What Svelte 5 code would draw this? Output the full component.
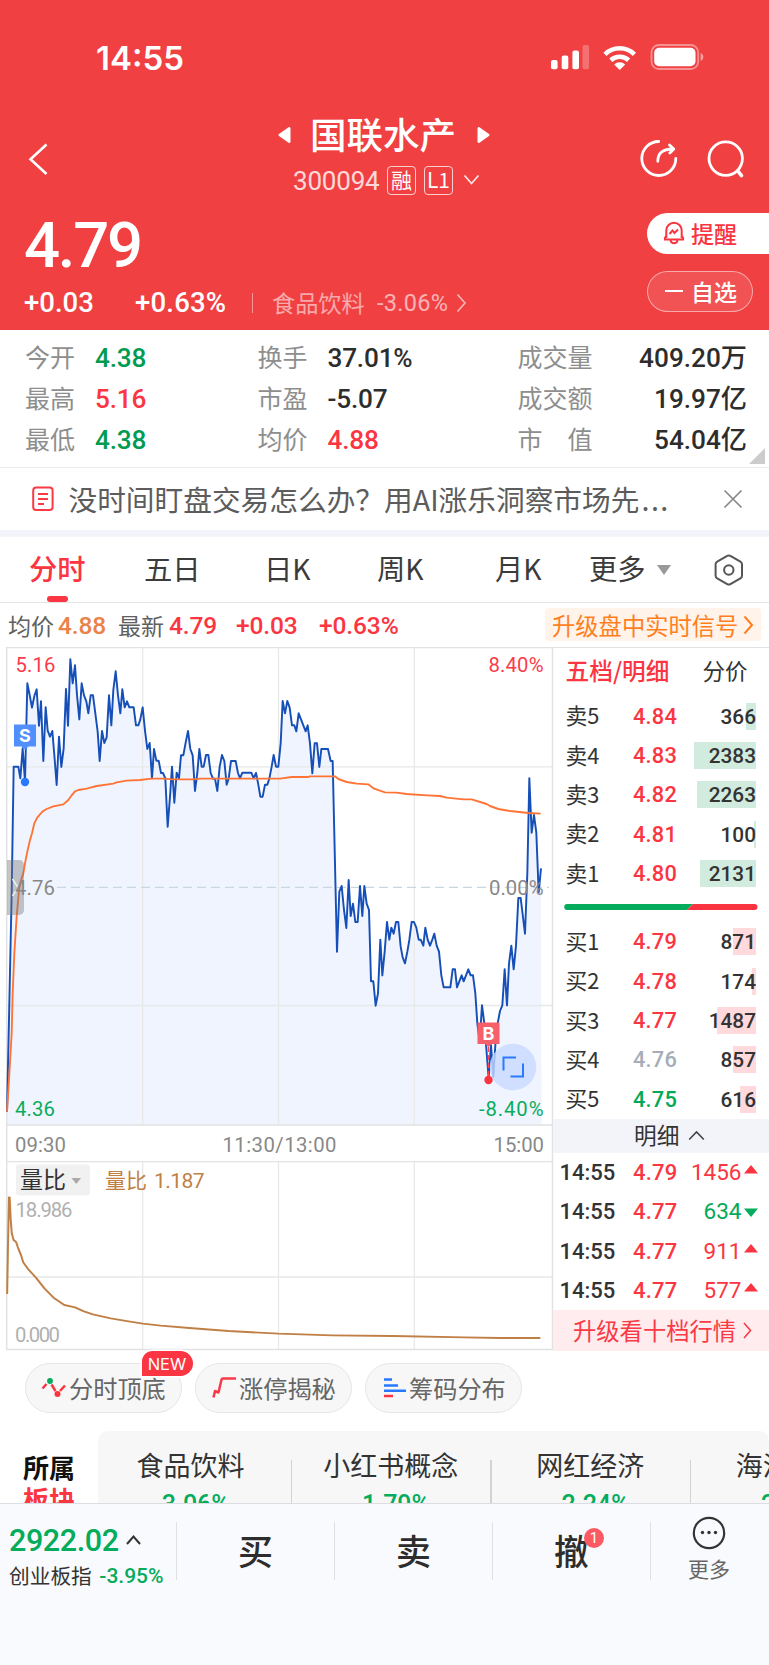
<script>
  const stats = [
    ['今开', '4.38', 'green', '换手', '37.01%', '', '成交量', '409.20万'],
    ['最高', '5.16', 'red', '市盈', '-5.07', '', '成交额', '19.97亿'],
    ['最低', '4.38', 'green', '均价', '4.88', 'red', '市　值', '54.04亿']
  ];
  const asks = [
    ['卖5', '4.84', 366, 10],
    ['卖4', '4.83', 2383, 62],
    ['卖3', '4.82', 2263, 59],
    ['卖2', '4.81', 100, 2],
    ['卖1', '4.80', 2131, 56]
  ];
  const bids = [
    ['买1', '4.79', 871, 23, 'red'],
    ['买2', '4.78', 174, 4.5, 'red'],
    ['买3', '4.77', 1487, 39, 'red'],
    ['买4', '4.76', 857, 23, 'flat'],
    ['买5', '4.75', 616, 16, 'green']
  ];
  const ticks = [
    ['14:55', '4.79', 1456, true],
    ['14:55', '4.77', 634, false],
    ['14:55', '4.77', 911, true],
    ['14:55', '4.77', 577, true]
  ];
  const sectors = [
    ['食品饮料', '-3.06%'],
    ['小红书概念', '-1.79%'],
    ['网红经济', '-2.24%'],
    ['海洋经济', '-2.35%']
  ];

  const morning =
    '21,1415 28,1090 35,760 41,380 55,380 61,415 68,325 75,425 82,130 89,165 96,203 103,168 110,148 117,257 123,184 130,363 137,202 143,272 150,290 157,273 163,345 170,435 177,290 184,381 191,325 198,147 204,257 211,58 218,130 225,76 231,165 238,238 245,130 252,166 259,184 265,220 272,166 279,166 286,220 293,275 299,363 306,273 313,309 320,292 327,166 334,256 340,150 347,94 354,166 361,220 367,148 374,202 381,184 388,202 401,202 408,256 415,256 421,238 428,202 435,272 442,327 449,309 456,415 462,327 469,362 476,362 483,399 489,399 496,415 503,560 510,470 516,380 523,488 530,398 537,415 543,346 550,346 557,308 564,273 571,327 578,346 585,453 592,399 598,327 605,380 611,380 618,345 625,345 632,399 639,416 645,416 652,453 659,380 666,345 673,363 680,434 686,416 693,363 707,363 714,399 720,415 727,398 754,398 761,415 768,399 775,434 781,470 788,470 795,434 802,434 808,416 815,380 821,345 828,380 835,380';
  const afternoon =
    '842,310 848,183 855,220 862,183 869,203 876,256 883,256 889,274 896,220 917,274 923,256 930,310 937,400 944,310 951,310 958,381 964,327 984,327 992,363 998,363 1011,935 1018,755 1025,738 1032,810 1039,864 1046,720 1052,828 1059,791 1066,846 1073,846 1080,738 1087,828 1093,738 1100,791 1107,810 1113,1024 1120,1024 1127,1097 1134,1060 1141,899 1147,1006 1154,935 1161,846 1168,899 1174,863 1181,881 1188,846 1195,846 1202,920 1208,952 1215,970 1222,935 1228,900 1235,846 1242,846 1249,863 1256,899 1262,899 1270,917 1276,863 1283,899 1290,917 1297,899 1303,881 1310,917 1317,935 1324,1006 1331,1042 1351,1042 1358,988 1365,988 1371,1042 1378,1024 1385,1006 1391,1024 1398,1006 1405,988 1412,1006 1419,1006 1426,1060 1432,1150 1439,1205 1446,1096 1453,1150 1459,1225 1466,1315 1473,1215 1480,1310 1487,1200 1493,1150 1500,1113 1507,1096 1514,988 1521,1096 1527,971 1534,917 1541,988 1548,917 1555,774 1562,774 1575,881 1582,700 1588,415 1595,578 1602,525 1609,578 1616,757 1623,685';
  const price = morning + ' ' + afternoon;
  const average =
    '21,1415 28,1300 35,1180 38,1060 43,940 50,830 56,760 60,730 70,700 76,665 82,635 90,600 96,580 103,550 112,532 128,514 140,507 160,499 190,493 205,480 215,466 225,454 235,450 260,446 290,438 340,431 350,427 380,422 420,420 455,416 495,416 515,418 580,418 600,416 840,416 875,411 925,411 930,409 1005,409 1015,417 1040,426 1070,431 1105,433 1122,446 1155,457 1190,458 1220,462 1280,466 1320,468 1340,473 1390,478 1415,478 1460,492 1470,498 1495,507 1530,513 1585,519 1622,521';
  const ratio =
    '20,522 22,400 25,232 27,232 30,300 33,340 38,360 45,366 50,382 58,403 65,427 80,449 100,472 125,506 150,533 180,555 210,562 235,574 260,583 310,595 360,604 400,611 450,617 530,624 640,633 780,641 930,646 1100,648 1300,652 1400,654 1513,654';
</script>

<div class="page">
  <header>
    <div class="status">
      <span class="clock">14:55</span>
      <svg width="154" height="26" viewBox="551 44 154 26" fill="#fff">
        <rect x="551" y="60" width="6.6" height="9.2" rx="2" />
        <rect x="561.7" y="55.5" width="6.6" height="13.7" rx="2" />
        <rect x="572.4" y="50.5" width="6.6" height="18.7" rx="2" />
        <rect x="582.5" y="45" width="6.6" height="24.2" rx="2" opacity=".25" />
        <g fill="none" stroke="#fff" stroke-width="4.6">
          <path d="M605 54.300a21 21 0 0 1 29.400 0" />
          <path d="M610.800 60.200a13 13 0 0 1 17.800 0" />
        </g>
        <path d="M614.200 64.400a8 8 0 0 1 11 0l-5.500 5.600z" />
        <rect x="651.500" y="45" width="46.700" height="24" rx="7.500" fill="none" stroke="#fff" stroke-opacity=".42" stroke-width="1.800" />
        <rect x="654.200" y="47.800" width="41.300" height="18.400" rx="5" />
        <path d="M700.600 53v8c3.600-1.300 3.600-6.700 0-8z" opacity=".5" />
      </svg>
    </div>
    <div class="nav">
      <svg class="back" width="22" height="34" viewBox="27 142 22 34" fill="none" stroke="#fff" stroke-width="2.6"><path d="M46.500 144.500L30.500 159.300L46.500 174" /></svg>
      <div class="name">
        <div class="title">
          <svg width="13" height="18" viewBox="0 0 13 18" fill="#fff"><path d="M10.500 1.200L1 8a1.300 1.300 0 0 0 0 2l9.500 6.800a1.300 1.300 0 0 0 2-1V2.200a1.300 1.300 0 0 0-2-1z" /></svg>
          <span>国联水产</span>
          <svg width="13" height="18" viewBox="0 0 13 18" fill="#fff"><path d="M2.500 1.200L12 8a1.300 1.300 0 0 1 0 2l-9.500 6.800a1.300 1.300 0 0 1-2-1V2.200a1.300 1.300 0 0 1 2-1z" /></svg>
        </div>
        <div class="code">
          <span class="num">300094</span>
          <b>融</b><b class="lv">L1</b>
          <svg width="17" height="12" viewBox="0 0 17 12" fill="none" stroke="#fff" stroke-opacity=".85" stroke-width="1.800"><path d="M1.500 1.500l7 8l7-8" /></svg>
        </div>
      </div>
      <svg class="actions" width="106" height="40" viewBox="640 139 106 40" fill="none" stroke="#fff" stroke-width="2.800" stroke-linecap="round">
        <path d="M658.700 141.500A17 17 0 1 0 675.800 158.500" />
        <path d="M657.800 161.300c0-7.500 3.500-12.300 15.500-12.300M669.500 145l4.300 4l-4 4" stroke-linejoin="round" />
        <circle cx="725.700" cy="158.600" r="16.700" /><path d="M737.800 171l3.700 4.700" stroke-width="3.600" />
      </svg>
    </div>
    <div class="quote">
      <div class="left">
        <div class="big">4.79</div>
        <div class="change">
          <span class="d1">+0.03</span><span class="d2">+0.63%</span><i></i>
          <span class="ind">食品饮料</span><span class="indp">-3.06%</span>
          <svg width="11" height="20" viewBox="0 0 11 20" fill="none" stroke="#fff" stroke-opacity=".6" stroke-width="1.700"><path d="M1.500 1.500L9 10L1.500 18.500" /></svg>
        </div>
      </div>
      <div class="right">
        <div class="pill alert">
          <svg width="22" height="24" viewBox="0 0 22 24" fill="none" stroke="#f9353f" stroke-width="2"><path d="M3.300 17V9.500a7.700 7.700 0 0 1 15.400 0V17M1 18.500h20M3.300 14.500L1.500 18M18.700 14.500L20.500 18M7.500 19.500c.8 3.500 6.200 3.500 7 0M6.500 13l3-3.500l2 2.500l3.500-3.500" /></svg>
          提醒
        </div>
        <div class="pill own"><i></i>自选</div>
      </div>
    </div>
  </header>

  <section class="stats">
    {#each stats as s}
      <div class="row">
        <span class="lb">{s[0]}</span><span class="vl {s[2]}">{s[1]}</span>
        <span class="lb">{s[3]}</span><span class="vl {s[5]}">{s[4]}</span>
        <span class="lb">{s[6]}</span><span class="vl end">{s[7]}</span>
      </div>
    {/each}
    <span class="corner"></span>
  </section>

  <section class="notice">
    <svg width="22" height="26" viewBox="0 0 22 26" fill="none" stroke="#fa3a45" stroke-width="2"><rect x="1.200" y="1.500" width="19.400" height="22.500" rx="3" /><path d="M6 8h10M6 13h10M6 18h6" stroke-width="1.800" /></svg>
    <p>没时间盯盘交易怎么办？用AI涨乐洞察市场先<span>...</span></p>
    <svg width="20" height="20" viewBox="0 0 20 20" stroke="#888" stroke-width="1.700"><path d="M1.500 1.500l17 17M18.500 1.500l-17 17" /></svg>
  </section>

  <nav class="tabs">
    <span class="on">分时</span><span>五日</span><span>日K</span><span>周K</span><span>月K</span>
    <span>更多</span>
    <svg class="tri" width="14" height="10" viewBox="0 0 14 10" fill="#999"><path d="M0 0h14L7 10z" /></svg>
    <svg width="30" height="32" viewBox="0 0 30 32" fill="none" stroke="#555" stroke-width="2"><path d="M13.200 1.900a3 3 0 0 1 3.200 0l10 5.800a3 3 0 0 1 1.600 2.700v11.200a3 3 0 0 1-1.600 2.700l-10 5.800a3 3 0 0 1-3.200 0l-10-5.800a3 3 0 0 1-1.600-2.700V10.400a3 3 0 0 1 1.600-2.700z" /><circle cx="14.800" cy="16" r="4.700" /></svg>
  </nav>

  <section class="info">
    <span class="t">均价</span><span class="n a">4.88</span>
    <span class="t">最新</span><span class="n">4.79</span><span class="n p">+0.03</span><span class="n q">+0.63%</span>
    <div class="promo">升级盘中实时信号<svg width="11" height="20" viewBox="0 0 11 20" fill="none" stroke="#ff7f1f" stroke-width="2"><path d="M1.500 1.500L9 10L1.500 18.500" /></svg></div>
  </section>

  <section class="market">
    <div class="charts">
      <svg width="554" height="514" viewBox="0 647 554 514">
        <g transform="translate(0 640) scale(.33333)">
          <polygon points="21,1455 {price} 1625,1455" fill="#eff4ff" />
        </g>
        <g fill="none" stroke="#e8e8e8" stroke-width="1.300">
          <path d="M142.700 647v478M278.500 647v478M414.300 647v478M6 766.800h547M6 1005.500h547" />
          <path d="M6.700 1161V647.500H552.500V1161M6 1125h547" stroke="#e0e2e4" stroke-width="1.500" />
        </g>
        <path d="M57 887.300h492" stroke="#c9d7e0" stroke-width="1.300" stroke-dasharray="9 5" />
        <g transform="translate(0 640) scale(.33333)" fill="none">
          <polyline points={price} stroke="#164fb7" stroke-width="5.800" stroke-linejoin="round" />
          <polyline points={average} stroke="#ff7435" stroke-width="5.600" stroke-linejoin="round" />
        </g>
        <path d="M7 860h12a5 5 0 0 1 5 5v45a5 5 0 0 1-5 5H7z" fill="#777" fill-opacity=".42" />
        <path d="M12.500 879l5.500 8.500l-5.500 8.500" fill="none" stroke="#eee" stroke-width="1.500" />
        <g class="axis">
          <text x="15.500" y="672.400" fill="#fb3b49" textLength="40">5.16</text>
          <text x="543.500" y="672.400" text-anchor="end" fill="#fb3b49" textLength="55">8.40%</text>
          <text x="15" y="894.700" textLength="40">4.76</text>
          <text x="543.500" y="894.700" text-anchor="end" textLength="54.500">0.00%</text>
          <text x="15" y="1116.200" fill="#08ac5b" textLength="40">4.36</text>
          <text x="543.500" y="1116.200" text-anchor="end" fill="#08ac5b" textLength="64.500">-8.40%</text>
          <text x="15" y="1151.500" textLength="51">09:30</text>
          <text x="222.500" y="1151.500" textLength="114">11:30/13:00</text>
          <text x="493.500" y="1151.500" textLength="50.500">15:00</text>
        </g>
        <path d="M14 724.500h22v22h-7.500l-3.500 3l-3.500-3H14z" fill="#508ffc" />
        <circle cx="25" cy="782" r="4.200" fill="#2878ff" />
        <text class="tag" x="25" y="742">S</text>
        <path d="M488.500 1047v30" stroke="#ff4450" stroke-width="1.500" stroke-dasharray="5 3" />
        <circle cx="513" cy="1067" r="23.200" fill="#c8d9ff" fill-opacity=".8" />
        <path d="M516 1057.500h-12.500v13M510.500 1076.500h12.500v-13" fill="none" stroke="#2b7bff" stroke-width="2" />
        <path d="M477.500 1022.500h22v21.500h-7.500l-3.500 3l-3.500-3h-7.500z" fill="#f75f6b" />
        <circle cx="488.500" cy="1080" r="4.200" fill="#fb3441" />
        <text class="tag" x="488.500" y="1040">B</text>
      </svg>
      <svg width="554" height="190" viewBox="0 1161 554 190">
        <path d="M142.700 1161v189M278.500 1161v189M414.300 1161v189M6 1277h547" stroke="#e8e8e8" stroke-width="1.300" />
        <path d="M6.700 1161.500H552.500V1349.500H6.700z" fill="none" stroke="#e0e2e4" stroke-width="1.500" />
        <rect x="16" y="1164.500" width="74" height="31" rx="3" fill="#f1f1f1" />
        <g transform="translate(0 1120) scale(.35714 .33333)" fill="none"><polyline points={ratio} stroke="#c07f45" stroke-width="5.600" stroke-linejoin="round" /></g>
        <text x="20" y="1188" class="cn" font-size="23" fill="#333">量比</text>
        <path d="M71.500 1178h9.500l-4.700 6z" fill="#aaa" />
        <text x="105" y="1187.500" class="cn" font-size="21" fill="#c07f45">量比</text>
        <g class="axis">
          <text x="154" y="1187.500" fill="#c07f45" textLength="50.500" style="font-size:21px">1.187</text>
          <text x="15.500" y="1217.300" fill="#b0b0b0" textLength="57">18.986</text>
          <text x="15" y="1342.300" fill="#b0b0b0" textLength="45">0.000</text>
        </g>
      </svg>
    </div>

    <aside>
      <div class="head"><b>五档/明细</b><span>分价</span></div>
      {#each asks as a}
        <div class="lvl"><span>{a[0]}</span><em class="red">{a[1]}</em><strong><i class="g" style="width:{a[3]}px"></i>{a[2]}</strong></div>
      {/each}
      <svg class="split" width="194" height="8" viewBox="0 0 194 8"><path d="M3.200 1h126l-6.500 6H3.200a3 3 0 0 1 0-6z" fill="#04ac5c" /><path d="M129.200 1h61.300a3 3 0 0 1 0 6h-67.800z" fill="#fa3541" /></svg>
      {#each bids as a}
        <div class="lvl"><span>{a[0]}</span><em class={a[4]}>{a[1]}</em><strong><i class="r" style="width:{a[3]}px"></i>{a[2]}</strong></div>
      {/each}
      <div class="detail">明细<svg width="17" height="11" viewBox="0 0 17 11" fill="none" stroke="#444" stroke-width="1.600"><path d="M1.200 9.500l7.300-7.500l7.300 7.500" /></svg></div>
      {#each ticks as t}
        <div class="tick">
          <span>{t[0]}</span><em>{t[1]}</em><strong class={t[3] ? 'red' : 'green'}>{t[2]}</strong>
          <svg width="14" height="9" viewBox="0 0 14 9" class:down={!t[3]}><path d="M7 0l7 8.500H0z" fill={t[3] ? '#fb3441' : '#04ac5c'} /></svg>
        </div>
      {/each}
      <div class="up">升级看十档行情<svg width="9" height="17" viewBox="0 0 9 17" fill="none" stroke="#fa3a45" stroke-width="1.600"><path d="M1 1l6.500 7.500L1 16" /></svg></div>
    </aside>
  </section>

  <section class="chips">
    <div class="chip">
      <svg width="26" height="24" viewBox="0 0 26 24" fill="none" stroke="#fa3541" stroke-width="2.500"><path d="M1.500 12.500l4-4.500M10.500 8.500l4 6.500M19 15l5-5.500" /><circle cx="9" cy="5" r="2.900" fill="#04ac5c" stroke="none" /><circle cx="16.500" cy="18" r="3" fill="#fa3541" stroke="none" /></svg>
      分时顶底<span class="new">NEW</span>
    </div>
    <div class="chip">
      <svg width="26" height="24" viewBox="0 0 26 24" fill="none" stroke="#f93a48" stroke-width="2.500" stroke-linejoin="round"><path d="M2.500 21.500l1.500-6.500l3.500 1.500l3-13q.3-1 1.500-1H25" /></svg>
      涨停揭秘
    </div>
    <div class="chip">
      <svg width="26" height="24" viewBox="0 0 26 24" stroke="#2878ff" stroke-width="2.500"><path d="M3 3.500h8M3 9.500h14M3 14.700h22" /><path d="M3 20h9" stroke="#fa3541" /></svg>
      筹码分布
    </div>
  </section>

  <section class="sectors">
    <div class="belong"><span>所属</span><span class="red">板块</span></div>
    <div class="panel">
      {#each sectors as s}<div class="sec"><span>{s[0]}</span><em>{s[1]}</em></div>{/each}
    </div>
  </section>

  <footer>
    <div class="index">
      <div class="top">2922.02<svg width="15" height="10" viewBox="0 0 15 10" fill="none" stroke="#333" stroke-width="2"><path d="M1 9l6.500-7.500L14 9" /></svg></div>
      <div class="sub">创业板指<em>-3.95%</em></div>
    </div>
    <div class="act">买</div>
    <div class="act">卖</div>
    <div class="act"><span>撤<i>1</i></span></div>
    <div class="more">
      <svg width="34" height="34" viewBox="0 0 34 34" fill="none" stroke="#333" stroke-width="2.200"><circle cx="17" cy="17" r="15.200" /><g fill="#333" stroke="none"><circle cx="10.500" cy="16.500" r="1.700" /><circle cx="17" cy="16.500" r="1.700" /><circle cx="23.500" cy="16.500" r="1.700" /></g></svg>
      更多
    </div>
  </footer>
</div>

<style>
  :global(body) { margin: 0; background: #fff; }
  .page { width: 769px; height: 1665px; overflow: hidden; font-family: Roboto, 'Noto Sans CJK SC', sans-serif; color: #333; background: #fff; }
  .page * { box-sizing: border-box; white-space: nowrap; }
  svg { display: block; flex: none; }
  em, i { font-style: normal; }
  .red { color: #fb3541 !important; }
  .green { color: #04a957 !important; }
  .stats .green { color: #029b52 !important; }
  .flat { color: #a5adb8 !important; }

  header { height: 330px; background: #f04042; color: #fff; }
  .status { height: 104px; padding: 44px 64px 0 96px; display: flex; justify-content: space-between; align-items: flex-start; }
  .clock { font: 600 33px/28px Inter, sans-serif; letter-spacing: 0; }
  .nav { height: 100px; display: flex; align-items: flex-start; padding: 0 23px 0 27px; }
  .back { margin-top: 38px; }
  .name { flex: 1; padding-left: 1px; }
  .actions { margin-top: 35px; }
  .title { display: flex; align-items: center; height: 62px; padding-left: 228px; font: 500 36.500px/60px 'Noto Sans CJK SC', sans-serif; }
  .title span { margin: 0 21px 0 19px; padding-bottom: 2px; }
  .code { display: flex; align-items: center; height: 30px; margin-top: -1px; padding-left: 243px; }
  .code .num { font-size: 26px; line-height: 32px; padding-top: 2px; letter-spacing: -.2px; width: 94px; opacity: .8; }
  .code b { width: 29px; height: 29px; border: 1.500px solid rgba(255,255,255,.75); border-radius: 4px; font: 400 21px/25px 'Noto Sans CJK SC', sans-serif; text-align: center; margin-right: 8px; }
  .code svg { margin-left: 2px; }
  .quote { display: flex; justify-content: space-between; }
  .left { padding-left: 24px; }
  .big { height: 84px; font: 500 63.500px/83px Roboto, sans-serif; letter-spacing: -2.300px; }
  .change { display: flex; align-items: center; height: 30px; font: 500 27.500px/30px Roboto, sans-serif; }
  .d1 { width: 111px; } .d2 { width: 117px; letter-spacing: .2px; }
  .change i { width: 1px; height: 20px; background: rgba(255,255,255,.45); margin-right: 19px; }
  .ind { font: 400 23.200px/28px 'Noto Sans CJK SC', sans-serif; padding-bottom: 3px; width: 105px; opacity: .55; }
  .indp { font-size: 23.500px; font-weight: 400; width: 79px; opacity: .6; letter-spacing: .3px; }
  .right { width: 122px; padding-top: 9px; }
  .pill { height: 41px; display: flex; align-items: center; font: 500 23px/36px 'Noto Sans CJK SC', sans-serif; padding-bottom: 2px; }
  .alert { background: #fff; color: #f9353f; border-radius: 21px 0 0 21px; padding-left: 16px; gap: 6px; }
  .own { margin-top: 17px; width: 106px; border: 1.500px solid rgba(255,255,255,.5); background: rgba(255,255,255,.1); border-radius: 21px; padding-left: 17px; gap: 8px; }
  .own i { width: 18px; height: 2px; background: #fff; }

  .stats { height: 138px; padding: 5px 0 0 25px; border-bottom: 1.500px solid #ebebeb; position: relative; }
  .row { height: 41px; display: grid; grid-template-columns: 70px 162.500px 70px 190px 90px 139.500px; align-items: center; }
  .lb { font: 400 25px/38px 'Noto Sans CJK SC', sans-serif; color: #8e8e8e; }
  .vl { font: 500 26.200px/41px Roboto, 'Noto Sans CJK SC', sans-serif; padding-top: 3px; height: 41px; color: #2d2d2d; letter-spacing: -.2px; }
  .end { text-align: right; letter-spacing: 0; }
  .corner { position: absolute; right: 4px; bottom: 3px; border-left: 16px solid transparent; border-bottom: 16px solid #ccc; }

  .notice { height: 69px; display: flex; align-items: center; padding: 0 26px 0 32px; border-bottom: 7px solid #f2f4f9; }
  .notice p { flex: 1; margin: 0 0 0 14.500px; font: 400 28.700px/40px 'Noto Sans CJK SC', sans-serif; color: #5c5c5c; }
  .notice p span { letter-spacing: 1.500px; margin-left: 2px; }

  .tabs { height: 66px; border-bottom: 1.500px solid #e4e4e4; display: grid; grid-template-columns: 115px 120px 113px 118px 94px 68px 57px 30px; padding-left: 29px; align-items: center; font: 400 28.300px/62px 'Noto Sans CJK SC', sans-serif; color: #3b3b3b; }
  .tabs > span { height: 65px; }
  .tabs .on { color: #fb3541; font-weight: 500; position: relative; }
  .on::after { content: ''; position: absolute; left: 18px; bottom: 0; width: 21px; height: 6px; border-radius: 3px; background: #fb3541; }

  .info { height: 44px; display: flex; align-items: center; padding: 0 8px 1px; }
  .t { font: 400 23px/40px 'Noto Sans CJK SC', sans-serif; color: #606060; width: 50px; }
  .n { font: 500 24.500px/42px Roboto, sans-serif; color: #fb3541; width: 68px; padding-top: 2px; letter-spacing: -.1px; }
  .n.a { color: #ea8249; width: 60px; }
  .n:nth-child(4) { padding-left: 1px; }
  .n.p { width: 83px; }
  .promo { margin-left: auto; height: 33px; display: flex; align-items: center; gap: 5px; padding: 0 7px; width: 216px; background: #fff3ea; border-radius: 4px; color: #ff7f1f; font: 400 23.300px/30px 'Noto Sans CJK SC', sans-serif; }

  .market { height: 703px; display: flex; }
  .charts { width: 553px; flex: none; }
  .charts svg { margin-right: -1px; }
  .axis text { font: 400 20.300px Roboto, sans-serif; stroke: currentColor; stroke-width: 0; }
  .axis text:not([fill]) { fill: #888; }
  .cn { font-family: 'Noto Sans CJK SC', sans-serif; }
  .tag { font: 700 18px Inter, sans-serif; fill: #fff; text-anchor: middle; }
  aside { flex: 1; border-top: 1.500px solid #e0e2e4; }
  .head { height: 48.500px; padding-left: 12.500px; display: flex; font: 400 22.500px/44px 'Noto Sans CJK SC', sans-serif; }
  .head b { color: #fb3541; font-weight: 500; font-size: 23.700px; width: 137px; }
  .lvl { height: 39.350px; display: grid; grid-template-columns: 67.500px 60px 63px; align-items: center; padding-left: 12.500px; font: 500 21.800px/39px Roboto, sans-serif; }
  .lvl span { font: 400 21.800px/34px 'Noto Sans CJK SC', sans-serif; padding-bottom: 2px; }
  .lvl em, .tick em { letter-spacing: .2px; }
  .lvl strong { position: relative; height: 27px; font: 500 20.800px/28px Roboto, sans-serif; text-align: right; z-index: 0; }
  .lvl strong i { position: absolute; right: 0; top: 0; height: 27px; z-index: -1; }
  .g { background: #d1ebde; } .r { background: #ffd9dc; }
  .split { margin: 10px 0 11px 10.500px; }
  .detail { height: 33.500px; margin-top: .5px; background: #f2f4f9; display: flex; align-items: center; gap: 9px; padding: 0 0 2px 81px; font: 400 22.700px/30px 'Noto Sans CJK SC', sans-serif; }
  .tick { height: 39.350px; display: grid; grid-template-columns: 73.500px 50px 58.500px 16px; align-items: center; padding-left: 6.500px; font: 500 22px/39px Roboto, sans-serif; }
  .tick em { color: #fb3541; }
  .tick strong { text-align: right; font-weight: 400; font-size: 22.500px; }
  .tick svg { margin: -6px 0 0 2px; }
  .tick .down { transform: rotate(180deg); margin-top: 2px; }
  .up { height: 41px; background: #ffecee; color: #fa3a45; display: flex; align-items: center; gap: 7px; padding: 0 0 1px 20px; font: 400 23.300px/36px 'Noto Sans CJK SC', sans-serif; }

  .chips { height: 81px; display: flex; gap: 13px; padding: 13px 25px 0; }
  .chip { position: relative; width: 157px; height: 50px; border: 1.500px solid #e6e6e6; border-radius: 25px; background: #f7f7f7; display: flex; align-items: center; padding: 0 0 1px 15px; gap: 2px; font: 400 24.200px/44px 'Noto Sans CJK SC', sans-serif; color: #666; }
  .new { position: absolute; left: 115.500px; top: -13px; width: 51px; height: 25px; border-radius: 11px 13px 13px 0; background: #fb3541; box-shadow: 0 0 0 1.500px #fff; color: #fff; font: 400 16.500px/26px Inter, sans-serif; text-align: center; }

  .sectors { height: 72px; display: flex; overflow: hidden; }
  .belong { width: 98px; padding: 19px 0 0 23px; flex: none; display: flex; flex-direction: column; font: 700 26px/34px 'Noto Sans CJK SC', sans-serif; color: #111; }
  .belong .red { margin-top: -2px; }
  .panel { width: 671px; height: 110px; overflow: hidden; background: #f7f7f8; border-radius: 10px 10px 0 0; display: flex; }
  .sec { flex: none; width: 199.500px; padding-top: 15px; display: flex; flex-direction: column; align-items: center; position: relative; font: 400 27px/38px 'Noto Sans CJK SC', sans-serif; }
  .sec:first-child { width: 194px; padding-right: 7px; }
  .sec span { margin-left: -2px; }
  .sec::after { content: ''; position: absolute; right: 0; top: 29px; height: 60px; width: 1.500px; background: #d3d3d3; }
  .sec em { font: 500 25px/32px Roboto, sans-serif; color: #04ac5c; margin-top: 5px; }

  footer { height: 162px; background: #f9fafd; border-top: 1.500px solid #dcdde2; display: grid; grid-template-columns: 176px 158px 158px 158px 119px; align-items: start; }
  .index { padding: 18px 0 0 9px; }
  .top { display: flex; align-items: center; gap: 7px; height: 38px; font: 500 30.500px/38px Roboto, sans-serif; letter-spacing: -.4px; color: #04ac5c; }
  .top svg { margin-top: -3px; }
  .sub { display: flex; height: 32px; font: 400 20.700px/30px 'Noto Sans CJK SC', sans-serif; }
  .sub em { font: 500 21px/33px Roboto, sans-serif; color: #04ac5c; margin-left: 7.500px; }
  .act { margin-top: 18px; height: 58px; border-left: 1.500px solid #dfe0e4; text-align: center; font: 500 35px/55px 'Noto Sans CJK SC', sans-serif; color: #2d2d2d; }
  .act span { position: relative; }
  .act i { position: absolute; right: -15px; top: 4px; width: 20px; height: 20px; border-radius: 50%; background: #fb5a62; color: #fff; font: 400 15px/20px Roboto, sans-serif; }
  .more { margin-top: 18px; height: 58px; border-left: 1.500px solid #dfe0e4; display: flex; flex-direction: column; align-items: center; padding-right: 2px; font: 400 21px/30px 'Noto Sans CJK SC', sans-serif; color: #666; }
  .more svg { margin: -6px 0 3px; flex: none; }
</style>
